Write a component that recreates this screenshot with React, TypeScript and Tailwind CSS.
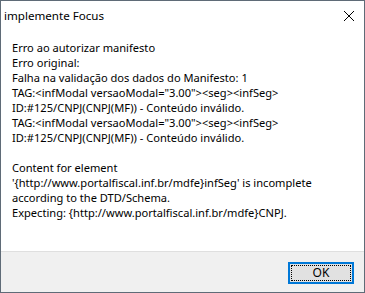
import React from 'react';

const lines = [
  'Erro ao autorizar manifesto',
  'Erro original:',
  'Falha na validação dos dados do Manifesto: 1',
  'TAG:<infModal versaoModal="3.00"><seg><infSeg>',
  'ID:#125/CNPJ(CNPJ(MF)) - Conteúdo inválido.',
  'TAG:<infModal versaoModal="3.00"><seg><infSeg>',
  'ID:#125/CNPJ(CNPJ(MF)) - Conteúdo inválido.',
  '',
  'Content for element',
  "'{http://www.portalfiscal.inf.br/mdfe}infSeg' is incomplete",
  'according to the DTD/Schema.',
  'Expecting: {http://www.portalfiscal.inf.br/mdfe}CNPJ.',
];

const App: React.FC = () => {
  return (
    <div
      className="w-[365px] h-[293px] flex flex-col border border-[#5f6b77] bg-white text-black text-[11.1px]"
      style={{ fontFamily: '"Noto Sans", "Open Sans", sans-serif' }}
    >
      {/* title bar */}
      <div className="h-[29px] flex items-center justify-between pl-[3px] pr-[9px]">
        <span className="leading-none text-[11.6px]">implemente Focus</span>
        <svg width="12" height="12" viewBox="0 0 12 12">
          <path d="M1 1 L11 11 M11 1 L1 11" stroke="#000" strokeWidth="1" />
        </svg>
      </div>

      {/* message */}
      <div className="flex-1 pl-[11px] pt-[10px]">
        {lines.map((l, i) => (
          <div key={i} className="h-[15px] leading-[15px] whitespace-pre">
            {l || ' '}
          </div>
        ))}
      </div>

      {/* footer */}
      <div className="h-[41px] bg-[#f0f0f0] border-t border-[#dfdfdf] flex items-center justify-end pr-[10px]">
        <button className="w-[66px] h-[22px] border-2 border-[#0078d7] bg-[#e1e1e1] p-[1px] mt-[1px]">
          <div className="w-full h-full border border-dotted border-black flex items-center justify-center leading-none text-[12px]">
            OK
          </div>
        </button>
      </div>
    </div>
  );
};

export default App;
